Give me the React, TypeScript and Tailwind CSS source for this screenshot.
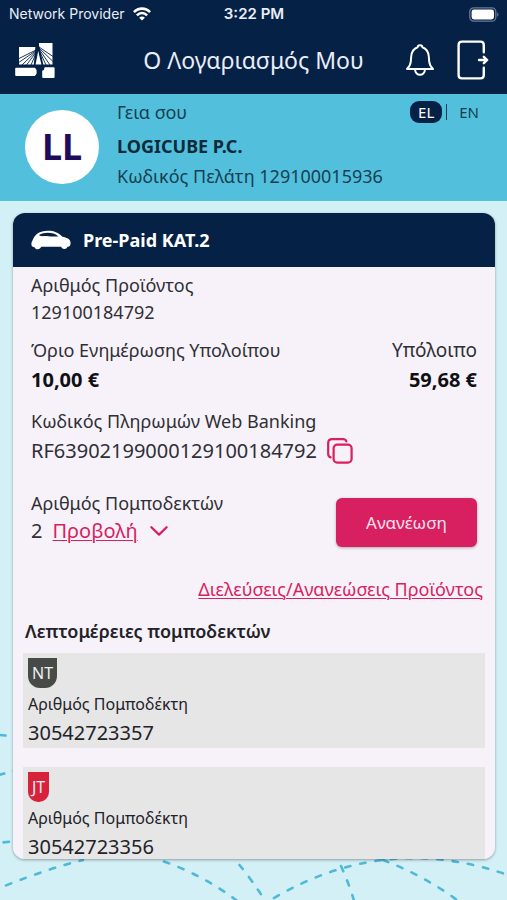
import React from "react";

const transponders = [
  { id: "nt", badge: "NT", number: "30542723357", badgeClass: "rounded-b-xl bg-[#474b47]" },
  { id: "jt", badge: "JT", number: "30542723356", badgeClass: "rounded-b-[10px] bg-[#d8213b]" },
];

function WifiIcon() {
  return (
    <svg viewBox="0 0 18 14" className="h-[14px] w-[18px]" fill="none" stroke="white" strokeWidth="2.6" aria-hidden="true">
      <path d="M0.9 5.2C5.4 0.4 12.6 0.4 17.1 5.2" />
      <path d="M3.9 8.3C6.8 5.3 11.2 5.3 14.1 8.3" />
      <path d="M9 13.6L6.1 10.7C7.7 9.2 10.3 9.2 11.9 10.7Z" fill="white" stroke="none" />
    </svg>
  );
}

function BatteryIcon() {
  return (
    <svg viewBox="0 0 30 15" className="h-[15px] w-[30px]" aria-hidden="true">
      <rect x="0.8" y="0.8" width="26" height="13.4" rx="4" fill="none" stroke="#6b7a94" strokeWidth="1.3" />
      <rect x="2.6" y="2.6" width="22.4" height="9.8" rx="2.4" fill="white" />
      <path d="M28.2 5.2C29.9 6 29.9 9 28.2 9.8Z" fill="#6b7a94" />
    </svg>
  );
}

function BridgeLogo() {
  return (
    <svg viewBox="0 0 40 36" className="h-9 w-10" aria-hidden="true">
      <path d="M4 5H21V22.500H4Z" fill="white" />
      <path d="M24 1H37.5V22.500H24Z" fill="white" />
      <g stroke="#062146" strokeWidth="0.9" fill="none">
        <path d="M22 7.5L3 17" />
        <path d="M22 8L3 21" />
        <path d="M22 8.500L7 23" />
        <path d="M22 9L11.500 23" />
        <path d="M22 9L16 23" />
        <path d="M24 5L38 14.500" />
        <path d="M24 6L38 19.500" />
        <path d="M24 7L35 23" />
        <path d="M24 8L31 23" />
      </g>
      <path d="M20.4 4.5H24.400L28.4 23H18.8Z" fill="#062146" />
      <path d="M23.2 9L26.4 22.500H20.6Z" fill="white" />
      <path d="M1.200 25.800H20L21.600 28V31.800L19.800 34H1.200Q0.200 34 0.200 33V26.800Q0.200 25.800 1.200 25.800Z" fill="white" />
      <path d="M29.600 25.200H38.600Q39.600 25.200 39.600 26.200V35Q39.600 36 38.600 36H28.200Q27.200 36 27.200 35V28.800Q29.600 28 29.600 25.200Z" fill="white" />
    </svg>
  );
}

function BellIcon() {
  return (
    <svg viewBox="0 0 30 34" className="h-[34px] w-[30px]" fill="none" stroke="white" strokeWidth="2" strokeLinecap="round" strokeLinejoin="round" aria-hidden="true">
      <path d="M12.6 4.200C12.600 1.600 17.400 1.600 17.400 4.200C21.600 5.600 23.400 9 23.800 13.500L24.200 18.500C24.600 22.200 25.800 24 28 26H2C4.200 24 5.400 22.200 5.800 18.500L6.200 13.500C6.600 9 8.400 5.600 12.600 4.200Z" />
      <path d="M10 26.400C10.400 33.600 19.600 33.600 20 26.400" />
    </svg>
  );
}

function LogoutIcon() {
  return (
    <svg viewBox="0 0 32 40" className="h-10 w-8" fill="none" stroke="white" strokeWidth="2.4" strokeLinecap="round" strokeLinejoin="round" aria-hidden="true">
      <path d="M26.8 12.2V5Q26.8 1.6 23.4 1.6H5Q1.6 1.6 1.6 5V35Q1.6 38.4 5 38.4H23.4Q26.8 38.4 26.8 35V27.8" />
      <path d="M22 20H29.8M26.8 16.8L30.2 20L26.8 23.2" />
    </svg>
  );
}

function CarIcon() {
  return (
    <svg viewBox="0 0 40 20" className="h-5 w-10" aria-hidden="true">
      <path
        d="M1.6 10.2C4 4.6 8 0.8 17 0.8C23 0.8 27.4 2.6 31.4 6.8C35.4 7.6 39.4 9 39.6 12.6C39.6 14.8 39.2 16.2 37.6 16.8H36.4C35.6 19.8 31.2 19.8 30.2 16.8H10.2C9.2 20 4.6 20 3.6 17.2C1.4 16.8 0.4 16 0.4 14.4C0.4 12.6 0.8 11.4 1.6 10.2Z"
        fill="white"
      />
      <path d="M8.4 4.8C13 2 22 1.6 27.6 6.4C21 6.2 12.6 6.4 9.6 5.9C8.6 5.7 8 5.2 8.4 4.8Z" fill="#062146" />
    </svg>
  );
}

function CopyIcon() {
  return (
    <svg viewBox="0 0 26 26" className="h-[26px] w-[26px]" fill="none" stroke="#d81f5f" strokeWidth="2.2" strokeLinecap="round" aria-hidden="true">
      <rect x="6.6" y="6.6" width="18" height="18" rx="3.6" />
      <path d="M3.6 19.4Q1.2 18.6 1.2 16V5Q1.2 1.2 5 1.2H16Q18.6 1.2 19.4 3.4" />
    </svg>
  );
}

function ChevronIcon() {
  return (
    <svg viewBox="0 0 18 10" className="h-[10px] w-[18px]" fill="none" stroke="#d81f5f" strokeWidth="2.2" strokeLinecap="round" strokeLinejoin="round" aria-hidden="true">
      <path d="M1.4 1.2L9 8.6L16.6 1.2" />
    </svg>
  );
}

function RouteLines() {
  return (
    <svg
      viewBox="0 0 507 180"
      className="pointer-events-none absolute inset-x-0 bottom-0 w-full"
      fill="none"
      stroke="#4fb9d8"
      strokeWidth="2.6"
      strokeLinecap="round"
      strokeDasharray="5.5 10"
      aria-hidden="true"
    >
      <path d="M0 15L30 18" />
      <path d="M-1 55L20 49" />
      <path d="M3.5 122.4L34 119" />
      <path d="M6 165.4Q50 148 83 140" />
      <path d="M164 141.500Q205 156 240 183" />
      <path d="M239.500 145Q252 160 266 182" />
      <path d="M274 178Q390 110 516 158" />
      <path d="M341 146Q350 166 355 184" />
      <path d="M383 140Q430 158 466 187" />
    </svg>
  );
}

export default function App() {
  return (
    <div className="relative flex h-screen flex-col overflow-hidden bg-[#d3f0f6] font-['Noto_Sans',sans-serif] text-[#2f2f36]">
      <RouteLines />

      <header className="relative bg-[#062146] text-[#e9eef6]">
        <div className="grid h-7 grid-cols-3 items-center pr-2 pl-[9px] font-['Inter',sans-serif] text-[15px]">
          <div className="flex items-center gap-2 text-sm whitespace-nowrap">
            <span>Network Provider</span>
            <WifiIcon />
          </div>
          <span className="text-center font-semibold">3:22 PM</span>
          <span className="flex justify-end">
            <BatteryIcon />
          </span>
        </div>
        <div className="flex h-[66px] items-center pr-[18px] pb-[2px] pl-[15px]">
          <div className="w-[87px]">
            <BridgeLogo />
          </div>
          <h1 className="flex-1 text-center text-[23px] whitespace-nowrap">Ο Λογαριασμός Μου</h1>
          <div className="flex items-center gap-[22px]">
            <button type="button" aria-label="Ειδοποιήσεις">
              <BellIcon />
            </button>
            <button type="button" aria-label="Αποσύνδεση">
              <LogoutIcon />
            </button>
          </div>
        </div>
      </header>

      <section className="relative flex h-[107px] shrink-0 bg-[#52c0dd] pt-1 pr-7 pl-[25px] text-[#173f52]">
        <div className="mt-3 flex size-[74px] items-center justify-center rounded-full bg-white text-4xl font-bold text-[#1f0a5c]">LL</div>
        <div className="ml-[18px] flex-1 whitespace-nowrap">
          <p className="h-8 text-[18px] leading-7">Γεια σου</p>
          <p className="h-8 text-[18px] leading-8 font-bold text-[#0c2a3a]">LOGICUBE P.C.</p>
          <p className="text-[18px] leading-7">Κωδικός Πελάτη 129100015936</p>
        </div>
        <div className="mt-[3px] flex h-[22px] items-center text-[15px]">
          <button type="button" className="h-[22px] rounded-[9px] bg-[#062146] px-2 leading-5 text-white">EL</button>
          <span className="ml-1 h-4 w-px bg-[#173f52]" />
          <button type="button" className="ml-3 leading-5">EN</button>
        </div>
      </section>

      <main className="relative flex min-h-0 flex-1 flex-col pt-3 pr-3 pb-[41px] pl-[13px]">
        <article className="min-h-0 flex-1 overflow-y-auto rounded-xl bg-[#f7f2f9] shadow-[0_1px_3px_rgba(0,0,0,0.35)] [scrollbar-width:none]">
          <h2 className="flex h-[54px] items-center gap-3 bg-[#062146] pl-[18px] text-[18px] font-bold text-white">
            <CarIcon />
            Pre-Paid KAT.2
          </h2>

          <div className="px-[18px] pt-1">
            <p className="text-[18px] leading-7">Αριθμός Προϊόντος</p>
            <p className="text-[18px] leading-[26px]">129100184792</p>

            <div className="mt-[11px] flex justify-between">
              <div>
                <p className="text-[18px] leading-7">Όριο Ενημέρωσης Υπολοίπου</p>
                <p className="text-xl leading-8 font-bold text-[#101014]">10,00 €</p>
              </div>
              <div className="text-right">
                <p className="text-[19px] leading-7">Υπόλοιπο</p>
                <p className="text-xl leading-8 font-bold text-[#101014]">59,68 €</p>
              </div>
            </div>

            <p className="mt-[11px] text-[18px] leading-7">Κωδικός Πληρωμών Web Banking</p>
            <div className="flex h-8 items-center gap-[10px] text-xl">
              <span>RF63902199000129100184792</span>
              <button type="button" aria-label="Αντιγραφή κωδικού">
                <CopyIcon />
              </button>
            </div>

            <div className="mt-[22px] flex items-end justify-between">
              <div className="pb-[2px]">
                <p className="text-[18px] leading-7">Αριθμός Πομποδεκτών</p>
                <div className="flex items-center text-xl leading-7">
                  <span>2</span>
                  <button type="button" className="ml-[10px] flex items-center gap-3 text-[#d81f5f]">
                    <span className="underline decoration-1 underline-offset-2">Προβολή</span>
                    <ChevronIcon />
                  </button>
                </div>
              </div>
              <button type="button" className="h-[49px] w-[141px] rounded-md bg-[#d81f5f] text-[17px] text-[#fbe3ee] shadow-[0_1px_3px_rgba(0,0,0,0.3)]">
                Ανανέωση
              </button>
            </div>
          </div>

          <div className="mt-7 pr-3 text-right text-[18px] leading-7">
            <a href="#transits" className="text-[#d81f5f] underline decoration-1 underline-offset-2">
              Διελεύσεις/Ανανεώσεις Προϊόντος
            </a>
          </div>

          <section className="px-[10px] pt-4">
            <h3 className="ml-[2px] text-[18px] leading-6 font-semibold text-[#222228]">Λεπτομέρειες πομποδεκτών</h3>
            <ul className="mt-[10px] flex flex-col gap-[19px]">
              {transponders.map((item) => (
                <li key={item.id} className="flex h-[95px] flex-col items-start bg-[#e6e6e6] px-[5px] pt-[5px]">
                  <span className={`h-[30px] px-1 text-base leading-[30px] text-[#f0f0f0] ${item.badgeClass}`}>{item.badge}</span>
                  <p className="mt-1 text-base leading-6 text-[#222228]">Αριθμός Πομποδέκτη</p>
                  <p className="mt-[6px] text-xl leading-[22px] text-[#222228]">{item.number}</p>
                </li>
              ))}
            </ul>
          </section>
        </article>
      </main>
    </div>
  );
}
